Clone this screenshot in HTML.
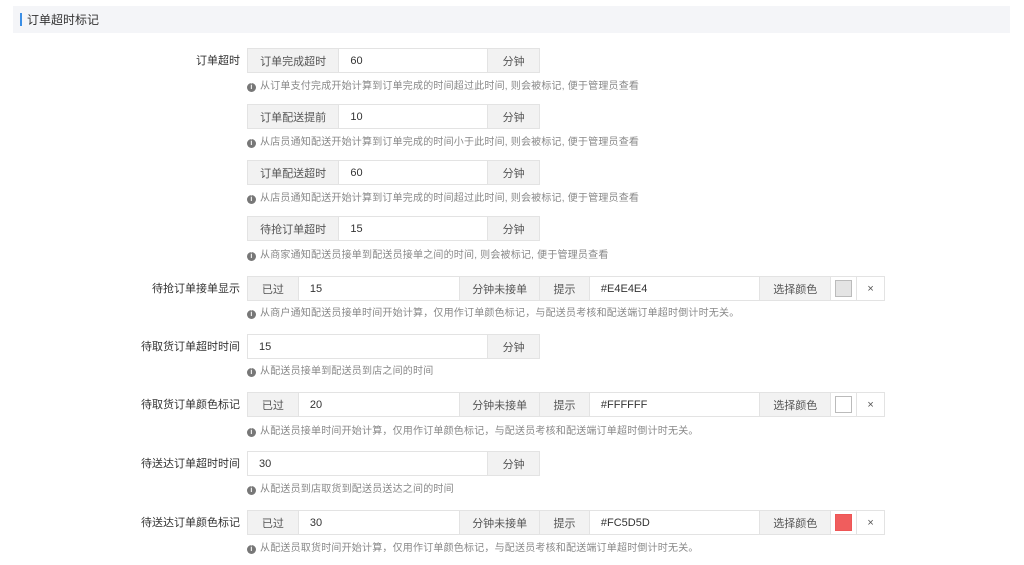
<!DOCTYPE html><html><head><meta charset="utf-8"><style>
body{margin:0;width:1024px;height:565px;background:#fff;font-family:"Liberation Sans","Noto Sans CJK SC",sans-serif;font-size:11px;color:#333;position:relative;overflow:hidden}
.hd{position:absolute;left:13px;top:6px;width:997px;height:27px;background:#f4f5f8}
.hd i{position:absolute;left:7px;top:7px;width:2px;height:13px;background:#3a8ee6}
.hd span{position:absolute;left:14px;top:5px;font-size:12px;color:#333}
.lb{position:absolute;right:784px;font-size:11px;color:#333;text-align:right;white-space:nowrap}
.g{position:absolute;height:25px;display:flex;border:1px solid #e3e3e3;box-sizing:border-box}
.g>div{height:100%;box-sizing:border-box;display:flex;align-items:center;border-right:1px solid #e3e3e3}
.g>div:last-child{border-right:0}
.a{background:#f2f2f2;justify-content:center;color:#555}
.in{background:#fff;padding-left:11px;color:#333}
.h{position:absolute;left:247px;font-size:10px;color:#888;white-space:nowrap;letter-spacing:0.2px}
.h b{display:inline-block;width:9px;height:9px;border-radius:50%;background:#777;color:#fff;font-size:7px;line-height:9px;text-align:center;vertical-align:0px;margin-right:4px;font-weight:bold}
.sw{width:26px;justify-content:center;background:#fff}
.sw span{width:17px;height:17px;border:1px solid #bbb;box-sizing:border-box;display:block}
</style></head><body>
<div class="hd"><i></i><span>订单超时标记</span></div>

<div class="lb" style="top:52px">订单超时</div>
<div class="g" style="left:247px;top:48px;width:293px"><div class="a" style="width:92px">订单完成超时</div><div class="in" style="width:150px">60</div><div class="a" style="width:51px">分钟</div></div>
<div class="h" style="top:77px"><b>i</b>从订单支付完成开始计算到订单完成的时间超过此时间, 则会被标记, 便于管理员查看</div>

<div class="g" style="left:247px;top:104px;width:293px"><div class="a" style="width:92px">订单配送提前</div><div class="in" style="width:150px">10</div><div class="a" style="width:51px">分钟</div></div>
<div class="h" style="top:133px"><b>i</b>从店员通知配送开始计算到订单完成的时间小于此时间, 则会被标记, 便于管理员查看</div>

<div class="g" style="left:247px;top:160px;width:293px"><div class="a" style="width:92px">订单配送超时</div><div class="in" style="width:150px">60</div><div class="a" style="width:51px">分钟</div></div>
<div class="h" style="top:189px"><b>i</b>从店员通知配送开始计算到订单完成的时间超过此时间, 则会被标记, 便于管理员查看</div>

<div class="g" style="left:247px;top:216px;width:293px"><div class="a" style="width:92px">待抢订单超时</div><div class="in" style="width:150px">15</div><div class="a" style="width:51px">分钟</div></div>
<div class="h" style="top:246px"><b>i</b>从商家通知配送员接单到配送员接单之间的时间, 则会被标记, 便于管理员查看</div>

<div class="lb" style="top:280px">待抢订单接单显示</div>
<div class="g" style="left:247px;top:276px;width:638px"><div class="a" style="width:51px">已过</div><div class="in" style="width:162px">15</div><div class="a" style="width:80px">分钟未接单</div><div class="a" style="width:50px">提示</div><div class="in" style="width:171px">#E4E4E4</div><div class="a" style="width:71px">选择颜色</div><div class="sw"><span style="background:#e4e4e4"></span></div><div class="a" style="width:27px;background:#fff">×</div></div>
<div class="h" style="top:304px"><b>i</b>从商户通知配送员接单时间开始计算，仅用作订单颜色标记，与配送员考核和配送端订单超时倒计时无关。</div>

<div class="lb" style="top:338px">待取货订单超时时间</div>
<div class="g" style="left:247px;top:334px;width:293px"><div class="in" style="width:242px">15</div><div class="a" style="width:51px">分钟</div></div>
<div class="h" style="top:362px"><b>i</b>从配送员接单到配送员到店之间的时间</div>

<div class="lb" style="top:396px">待取货订单颜色标记</div>
<div class="g" style="left:247px;top:392px;width:638px"><div class="a" style="width:51px">已过</div><div class="in" style="width:162px">20</div><div class="a" style="width:80px">分钟未接单</div><div class="a" style="width:50px">提示</div><div class="in" style="width:171px">#FFFFFF</div><div class="a" style="width:71px">选择颜色</div><div class="sw"><span style="background:#fff"></span></div><div class="a" style="width:27px;background:#fff">×</div></div>
<div class="h" style="top:422px"><b>i</b>从配送员接单时间开始计算，仅用作订单颜色标记，与配送员考核和配送端订单超时倒计时无关。</div>

<div class="lb" style="top:455px">待送达订单超时时间</div>
<div class="g" style="left:247px;top:451px;width:293px"><div class="in" style="width:242px">30</div><div class="a" style="width:51px">分钟</div></div>
<div class="h" style="top:480px"><b>i</b>从配送员到店取货到配送员送达之间的时间</div>

<div class="lb" style="top:514px">待送达订单颜色标记</div>
<div class="g" style="left:247px;top:510px;width:638px"><div class="a" style="width:51px">已过</div><div class="in" style="width:162px">30</div><div class="a" style="width:80px">分钟未接单</div><div class="a" style="width:50px">提示</div><div class="in" style="width:171px">#FC5D5D</div><div class="a" style="width:71px">选择颜色</div><div class="sw"><span style="background:#f05d5d;border-color:#e55"></span></div><div class="a" style="width:27px;background:#fff">×</div></div>
<div class="h" style="top:539px"><b>i</b>从配送员取货时间开始计算，仅用作订单颜色标记，与配送员考核和配送端订单超时倒计时无关。</div>
</body></html>
